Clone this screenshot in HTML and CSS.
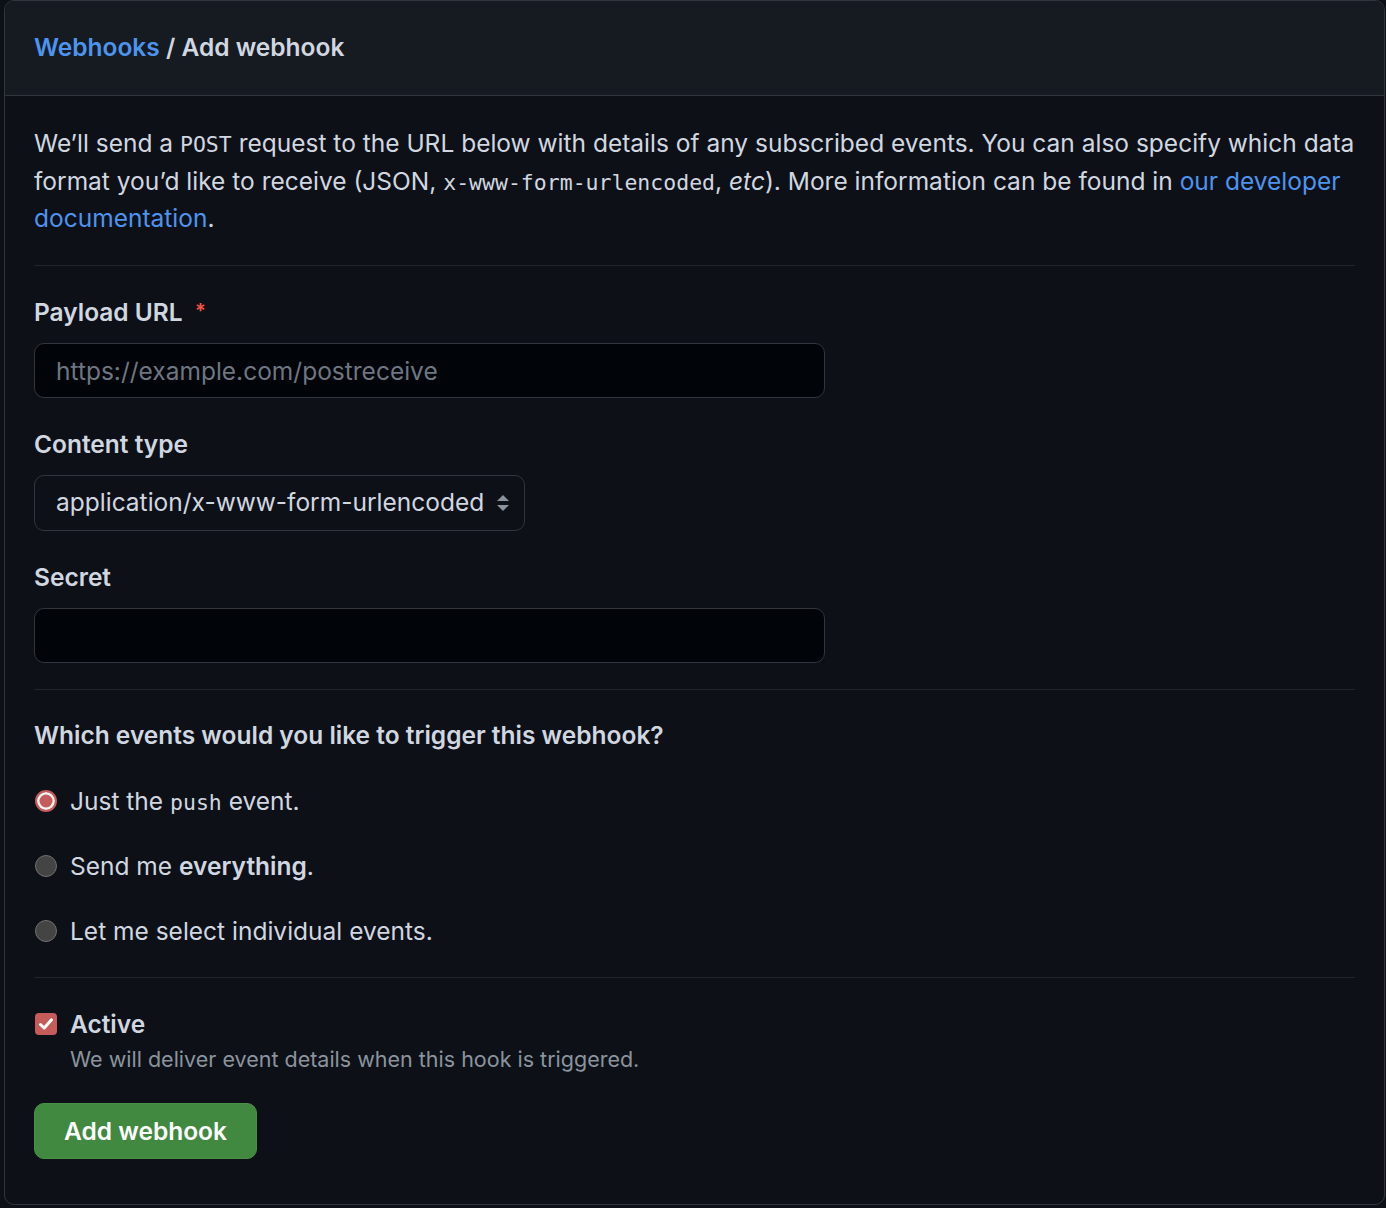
FILE: index.html
```html
<!DOCTYPE html>
<html lang="en">
<head>
  <meta charset="UTF-8">
  <meta name="viewport" content="width=device-width, initial-scale=1.0">
  <title>Add webhook</title>
  <link rel="stylesheet" href="styles.css">
</head>
<body>
  <div class="box">
    <div class="box-header">
      <h2><a href="#">Webhooks</a> <span class="sep">/</span> Add webhook</h2>
    </div>

    <form class="box-body">
      <p class="description">
        We’ll send a <code>POST</code> request to the URL below with details of any subscribed events. You can also specify which data format you’d like to receive (JSON, <code>x-www-form-urlencoded</code>, <em>etc</em>). More information can be found in <a href="#">our developer documentation</a>.
      </p>

      <hr>

      <div class="form-group">
        <label for="payload-url">Payload URL <span class="required">*</span></label>
        <input type="text" id="payload-url" class="form-control" placeholder="https://example.com/postreceive">
      </div>

      <div class="form-group">
        <label for="content-type">Content type</label>
        <div class="select" id="content-type">
          <span>application/x-www-form-urlencoded</span>
          <svg width="14" height="20" viewBox="0 0 14 20">
            <path d="M7 2 L13 8 H1 Z" fill="#8b949e"/>
            <path d="M7 18 L13 12 H1 Z" fill="#8b949e"/>
          </svg>
        </div>
      </div>

      <div class="form-group last">
        <label for="secret">Secret</label>
        <input type="text" id="secret" class="form-control">
      </div>

      <hr>

      <h3>Which events would you like to trigger this webhook?</h3>

      <div class="radio-list">
        <label class="radio"><input type="radio" name="events" checked><span>Just the <code>push</code> event.</span></label>
        <label class="radio"><input type="radio" name="events"><span>Send me <strong>everything</strong>.</span></label>
        <label class="radio"><input type="radio" name="events"><span>Let me select individual events.</span></label>
      </div>

      <hr>

      <div class="check-group">
        <label class="check">
          <span class="checkbox">
            <svg width="22" height="22" viewBox="0 0 22 22"><path d="M5.5 11.5 L9.2 15 L16.5 6.8" fill="none" stroke="#fff" stroke-width="3" stroke-linecap="round" stroke-linejoin="round"/></svg>
          </span>
          <span>Active</span>
        </label>
        <div class="note">We will deliver event details when this hook is triggered.</div>
      </div>

      <button type="submit" class="btn-primary">Add webhook</button>
    </form>
  </div>
</body>
</html>
```

FILE: styles.css
```css
body {
  font-family: Inter, 'Noto Sans', sans-serif;
  background-color: #0d1117;
  color: #d1d7e0;
  margin: 0;
  padding: 0 1px 4px 4px;
  font-size: 24.5px;
  line-height: 37.5px;
}
a {
  color: #4d94ef;
  text-decoration: none;
}
code {
  font-family: 'DejaVu Sans Mono', 'Liberation Mono', monospace;
  font-size: 21.5px;
  line-height: 1;
}
.box {
  border: 1px solid #30363d;
  border-radius: 10px;
  overflow: hidden;
}
.box-header {
  background: #161b22;
  border-bottom: 1px solid #30363d;
  padding: 0 29px;
  height: 94px;
  display: flex;
  align-items: center;
}
.box-header h2 {
  margin: 0;
  font-size: 24.5px;
  font-weight: 600;
  color: #d1d7e0;
}
.box-body {
  padding: 29px 29px 45px;
}
.description {
  margin: 0 0 27.5px;
}
hr {
  border: 0;
  border-top: 1px solid #21262d;
  margin: 0 0 27.5px;
}
.form-group {
  margin-bottom: 27.5px;
}
.form-group.last {
  margin-bottom: 25.5px;
}
.form-group label {
  display: block;
  font-weight: 600;
  margin-bottom: 12px;
}
.required {
  color: #f85149;
  margin-left: 6px;
  font-size: 20px;
  line-height: 1;
  vertical-align: 3px;
}
.form-control {
  display: block;
  width: 791px;
  height: 55px;
  box-sizing: border-box;
  padding: 0 21px;
  background: #010409;
  border: 1px solid #30363d;
  border-radius: 10px;
  color: #d1d7e0;
  font-family: inherit;
  font-size: 24.5px;
}
.form-control::placeholder {
  color: #6e7681;
}
.select {
  width: 491px;
  height: 56px;
  box-sizing: border-box;
  padding: 0 14px 0 21px;
  border: 1px solid #30363d;
  border-radius: 10px;
  background: #0d1117;
  display: flex;
  align-items: center;
  justify-content: space-between;
}
h3 {
  margin: 0 0 28px;
  font-size: 24.5px;
  font-weight: 600;
}
.radio-list {
  display: flex;
  flex-direction: column;
  gap: 27.5px;
  margin-bottom: 27px;
}
.radio {
  display: flex;
  align-items: center;
  gap: 13px;
}
.radio strong {
  font-weight: 600;
}
.radio input {
  appearance: none;
  flex: none;
  width: 22px;
  height: 22px;
  margin: 0 0 0 1px;
  border-radius: 50%;
  background: #444;
  border: 1.5px solid #707070;
  box-sizing: border-box;
}
.radio input:checked {
  background: #c55b5b;
  border: 2px solid #c55b5b;
  box-shadow: inset 0 0 0 2.5px #f2f2f2;
}
.check-group {
  margin-bottom: 28px;
}
.check {
  display: flex;
  align-items: center;
  gap: 13px;
  font-weight: 600;
}
.checkbox {
  width: 22px;
  height: 22px;
  margin-left: 1px;
  border-radius: 4px;
  background: #c55b5b;
  display: flex;
}
.note {
  padding-left: 36px;
  font-size: 21.5px;
  line-height: 32px;
  color: #8b949e;
}
.btn-primary {
  display: block;
  height: 56px;
  padding: 0 29px;
  background: #418941;
  border: 1px solid #4a9148;
  border-radius: 10px;
  color: #fff;
  font-family: inherit;
  font-size: 24.5px;
  font-weight: 600;
  cursor: pointer;
}
```
